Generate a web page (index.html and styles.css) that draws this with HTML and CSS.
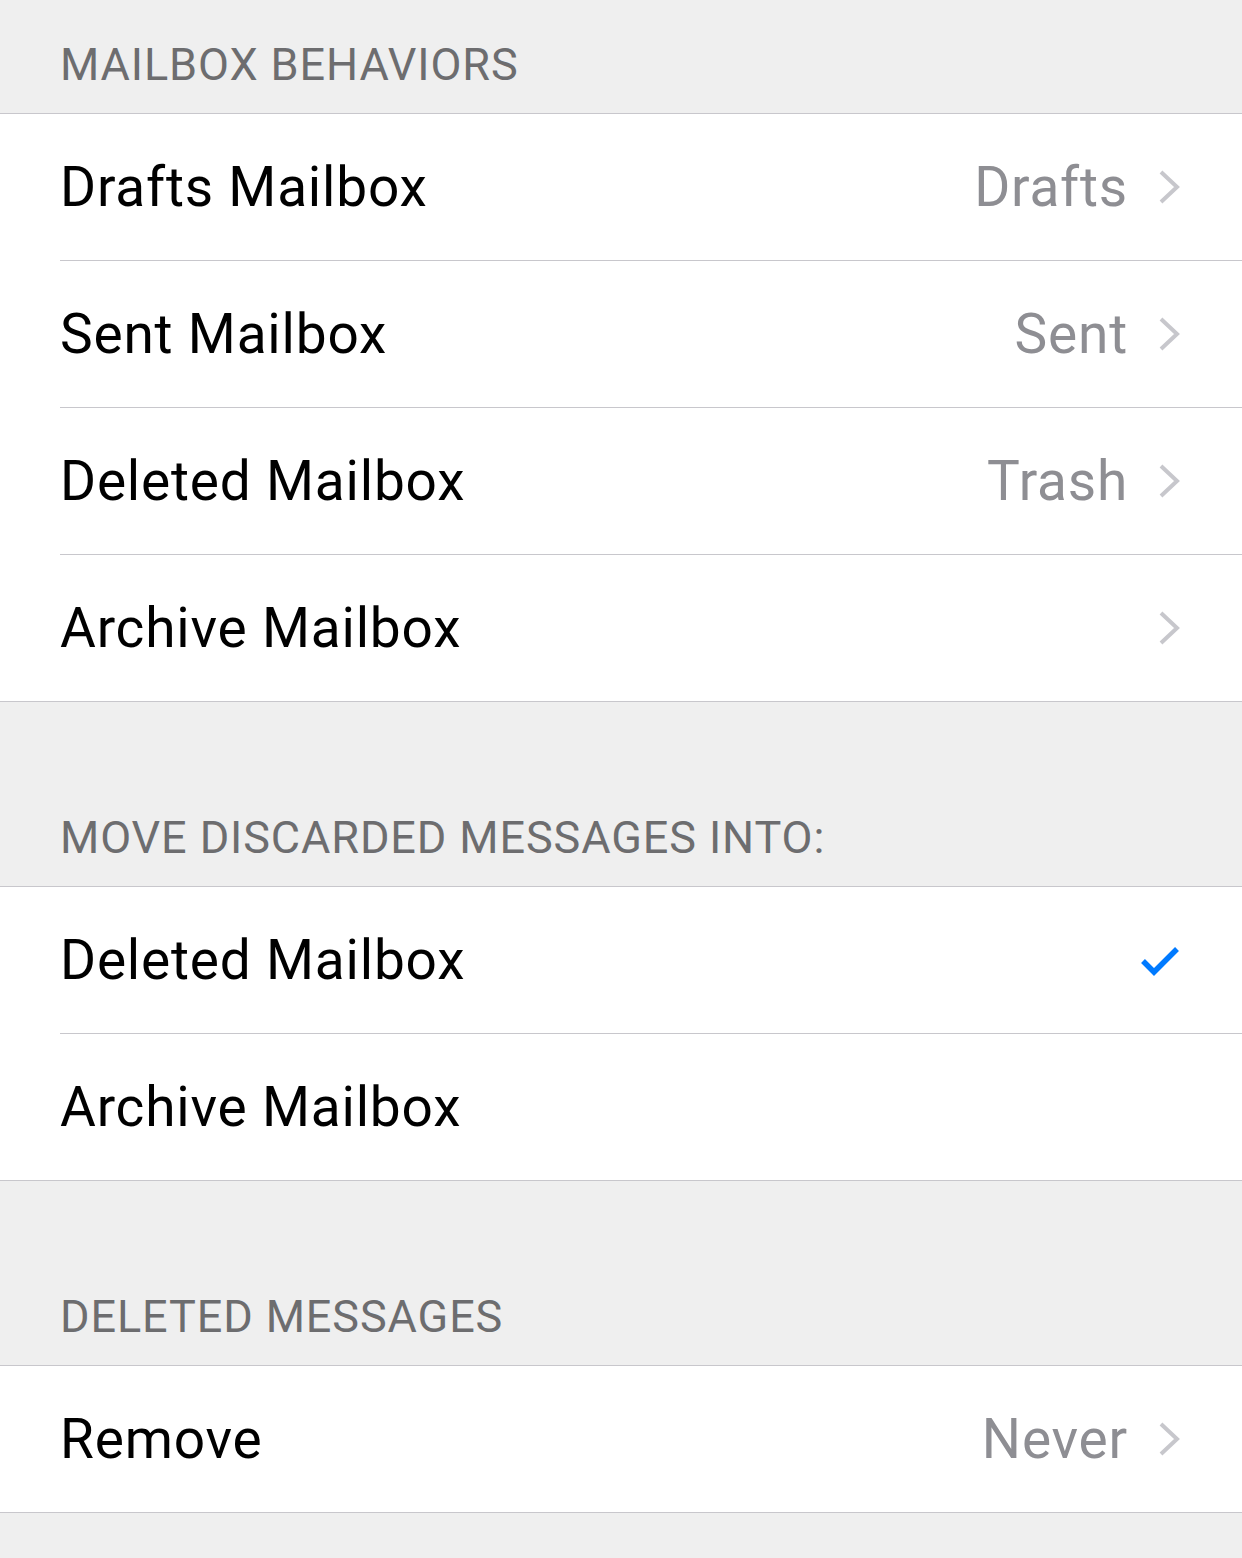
FILE: index.html
```html
<!doctype html>
<html lang="en">
    <head>
        <meta charset="utf-8">
        <meta name="viewport" content="width=device-width, initial-scale=1">
        <title>Mailbox Behaviors</title>
        <link rel="stylesheet" href="styles.css">
    </head>
    <body>
        <div class="ajustes">
            <div class="seccion-titulo primero">MAILBOX BEHAVIORS</div>
            <ul class="grupo">
                <li class="fila">
                    <span class="etiqueta">Drafts Mailbox</span>
                    <span class="valor">Drafts</span>
                    <svg class="chevron" viewBox="0 0 24 36"><polyline points="3,3 19,18 3,33"/></svg>
                </li>
                <li class="fila">
                    <span class="etiqueta">Sent Mailbox</span>
                    <span class="valor">Sent</span>
                    <svg class="chevron" viewBox="0 0 24 36"><polyline points="3,3 19,18 3,33"/></svg>
                </li>
                <li class="fila">
                    <span class="etiqueta">Deleted Mailbox</span>
                    <span class="valor">Trash</span>
                    <svg class="chevron" viewBox="0 0 24 36"><polyline points="3,3 19,18 3,33"/></svg>
                </li>
                <li class="fila">
                    <span class="etiqueta">Archive Mailbox</span>
                    <span class="valor"></span>
                    <svg class="chevron" viewBox="0 0 24 36"><polyline points="3,3 19,18 3,33"/></svg>
                </li>
            </ul>

            <div class="seccion-titulo">MOVE DISCARDED MESSAGES INTO:</div>
            <ul class="grupo">
                <li class="fila">
                    <span class="etiqueta">Deleted Mailbox</span>
                    <svg class="check" viewBox="0 0 40 32"><polyline points="3,17 14,28 37,5"/></svg>
                </li>
                <li class="fila">
                    <span class="etiqueta">Archive Mailbox</span>
                </li>
            </ul>

            <div class="seccion-titulo">DELETED MESSAGES</div>
            <ul class="grupo">
                <li class="fila">
                    <span class="etiqueta">Remove</span>
                    <span class="valor">Never</span>
                    <svg class="chevron" viewBox="0 0 24 36"><polyline points="3,3 19,18 3,33"/></svg>
                </li>
            </ul>
        </div>
    </body>
</html>
```

FILE: styles.css
```css
:root {
    --fondo: #efefef;
    --separador: #c8c7cc;
    --texto-titulo: #6d6d6f;
    --texto-valor: #8e8e93;
    --chevron: #c7c7cc;
    --azul: #007aff;
}

body {
    margin: 0;
    padding: 0;
    background-color: var(--fondo);
    font-family: Roboto, "Noto Sans", Arial, sans-serif;
}

.ajustes {
    min-height: 1558px;
}

.seccion-titulo {
    height: 184px;
    box-sizing: border-box;
    display: flex;
    align-items: flex-end;
    padding: 0 60px 26px 60px;
    font-size: 45px;
    line-height: 1;
    letter-spacing: 0.9px;
    color: var(--texto-titulo);
}

.seccion-titulo.primero {
    height: 113px;
}

.grupo {
    list-style: none;
    margin: 0;
    padding: 0 0 0 60px;
    background-color: white;
    border-top: 1px solid var(--separador);
    border-bottom: 1px solid var(--separador);
}

.fila {
    height: 146px;
    display: flex;
    align-items: center;
    padding-right: 60px;
    border-bottom: 1px solid var(--separador);
    font-size: 55px;
    line-height: 1;
    letter-spacing: 0.8px;
}

.fila:last-child {
    border-bottom: none;
}

.etiqueta {
    flex: 1;
    color: black;
}

.valor {
    color: var(--texto-valor);
    margin-right: 30px;
}

.chevron {
    width: 24px;
    height: 36px;
    fill: none;
    stroke: var(--chevron);
    stroke-width: 4;
}

.check {
    width: 40px;
    height: 32px;
    margin-right: 2px;
    fill: none;
    stroke: var(--azul);
    stroke-width: 5.5;
}
```
